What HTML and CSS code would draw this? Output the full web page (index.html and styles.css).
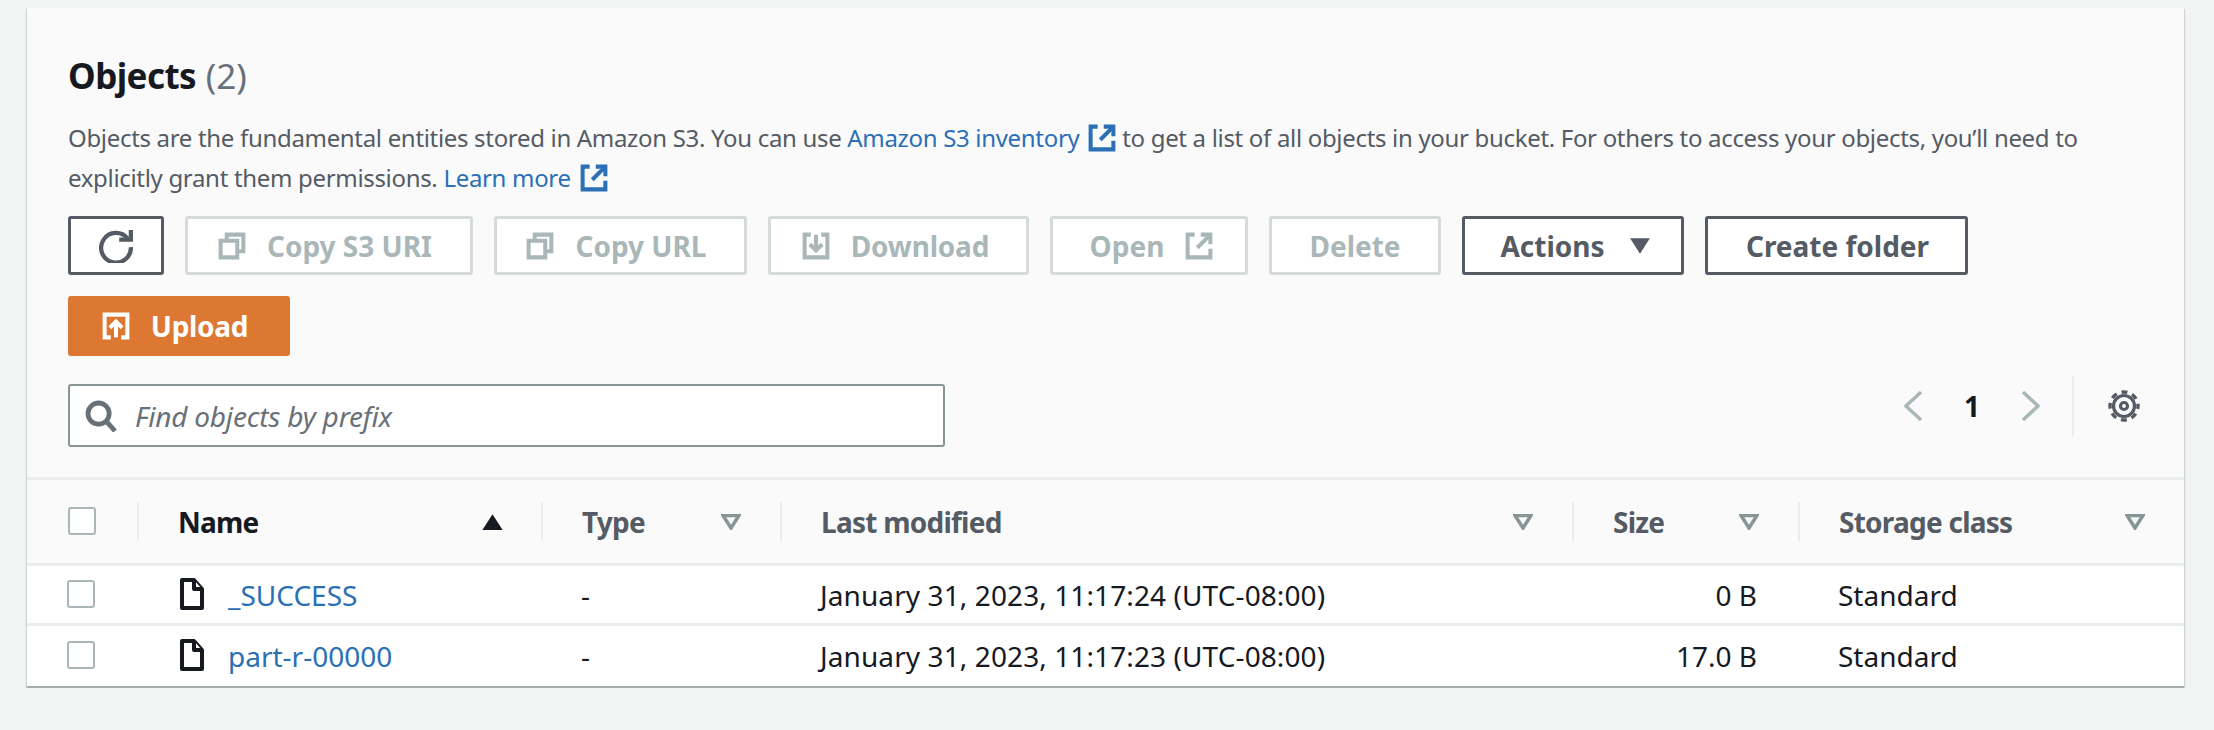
FILE: index.html
```html
<!DOCTYPE html>
<html lang="en">
<head>
    <meta charset="UTF-8">
    <title>Objects</title>
    <link rel="stylesheet" href="styles.css">
</head>
<body>
<svg class="defs" width="0" height="0" aria-hidden="true">
    <symbol id="i-external" viewBox="0 0 16 16"><path d="M5.500 1.500h-4v13h13V9.500"/><path d="M9 1.500h5.500V7"/><path d="M14.500 1.500 7 9"/></symbol>
    <symbol id="i-copy" viewBox="0 0 16 16"><path d="M1.500 5h9.500v9.500H1.500z"/><path d="M5 5V1.500h9.500V11H11"/></symbol>
    <symbol id="i-download" viewBox="0 0 16 16"><path d="M5 1.500H1.500v13h13v-13H11"/><path d="M8 1.500v9"/><path d="M4.500 7 8 10.500 11.500 7"/></symbol>
    <symbol id="i-upload" viewBox="0 0 16 16"><path d="M5 14.500H1.500v-13h13v13H11"/><path d="M8 14.500V5.500"/><path d="M4.500 9 8 5.500 11.500 9"/></symbol>
</svg>

<main class="card">
    <header class="card-head">
        <h2 class="title">Objects <span class="count">(2)</span></h2>
        <p class="desc">Objects are the fundamental entities stored in Amazon S3. You can use <a href="#">Amazon S3 inventory <svg class="ico-ext"><use href="#i-external"/></svg></a> to get a list of all objects in your bucket. For others to access your objects, you’ll need to explicitly grant them permissions. <a href="#">Learn more <svg class="ico-ext"><use href="#i-external"/></svg></a></p>

        <div class="actions">
            <button class="btn btn-icon" type="button" aria-label="Refresh">
                <svg class="ico ico-refresh" viewBox="0 0 16 16"><path d="M9.500 5h5.500V.5"/><path d="M15 8.500A7 7 0 1 1 13.500 4.500"/></svg>
            </button>
            <button class="btn btn-off btn-s3" type="button"><svg class="ico"><use href="#i-copy"/></svg>Copy S3 URI</button>
            <button class="btn btn-off btn-url" type="button"><svg class="ico"><use href="#i-copy"/></svg>Copy URL</button>
            <button class="btn btn-off btn-dl" type="button"><svg class="ico"><use href="#i-download"/></svg>Download</button>
            <button class="btn btn-off btn-open" type="button">Open<svg class="ico"><use href="#i-external"/></svg></button>
            <button class="btn btn-off btn-del" type="button">Delete</button>
            <button class="btn btn-act" type="button">Actions<svg class="caret" viewBox="0 0 20 16"><path d="M1 1h18L10 15z"/></svg></button>
            <button class="btn btn-new" type="button">Create folder</button>
            <button class="btn btn-up" type="button"><svg class="ico"><use href="#i-upload"/></svg>Upload</button>
        </div>

        <div class="tools">
            <label class="search">
                <svg class="ico ico-search" viewBox="0 0 16 16"><circle cx="6.800" cy="6.800" r="5.300"/><path d="m10.800 10.800 4.200 4.700"/></svg>
                <input type="text" placeholder="Find objects by prefix">
            </label>
            <div class="tools-right">
                <div class="pager">
                    <svg class="chev" viewBox="0 0 20 32"><path d="M18 2 3 16l15 14"/></svg>
                    <span class="page">1</span>
                    <svg class="chev" viewBox="0 0 20 32"><path d="M2 2l15 14L2 30"/></svg>
                </div>
                <button class="gear" type="button" aria-label="Preferences">
                    <svg viewBox="0 0 32 32">
                        <circle class="gear-teeth" cx="16" cy="16" r="14"/>
                        <circle cx="16" cy="16" r="10.500"/>
                        <circle cx="16" cy="16" r="3.500"/>
                    </svg>
                </button>
            </div>
        </div>
    </header>

    <div class="grid">
        <div class="th th-check"><span class="box"></span></div>
        <div class="th th-sorted">Name<svg class="caret sort" viewBox="0 0 20 16"><path d="M1 15h18L10 1z"/></svg></div>
        <div class="th">Type<svg class="filter" viewBox="0 0 20 16"><path d="M2 1.500h16L10 14z"/></svg></div>
        <div class="th">Last modified<svg class="filter" viewBox="0 0 20 16"><path d="M2 1.500h16L10 14z"/></svg></div>
        <div class="th">Size<svg class="filter" viewBox="0 0 20 16"><path d="M2 1.500h16L10 14z"/></svg></div>
        <div class="th">Storage class<svg class="filter" viewBox="0 0 20 16"><path d="M2 1.500h16L10 14z"/></svg></div>

        <div class="td td-check"><span class="box"></span></div>
        <div class="td td-name"><svg class="file" viewBox="0 0 24 32"><path d="M2 2h12l8 9v19H2z"/><path d="M14 2v9h8"/></svg><a href="#">_SUCCESS</a></div>
        <div class="td">-</div>
        <div class="td td-date">January 31, 2023, 11:17:24 (UTC-08:00)</div>
        <div class="td td-size">0 B</div>
        <div class="td">Standard</div>

        <div class="td td-check"><span class="box"></span></div>
        <div class="td td-name"><svg class="file" viewBox="0 0 24 32"><path d="M2 2h12l8 9v19H2z"/><path d="M14 2v9h8"/></svg><a href="#">part-r-00000</a></div>
        <div class="td">-</div>
        <div class="td td-date">January 31, 2023, 11:17:23 (UTC-08:00)</div>
        <div class="td td-size">17.0 B</div>
        <div class="td">Standard</div>
    </div>
</main>
</body>
</html>
```

FILE: styles.css
```css
* { box-sizing: border-box; }

body {
    margin: 0;
    background: #f2f3f3;
    color: #16191f;
    font-family: "Noto Sans", "Liberation Sans", sans-serif;
    font-size: 28px;
}

.defs { position: absolute; }

a { color: #2b6fb5; text-decoration: none; }

.card {
    width: 2157px;
    margin: 8px 0 0 27px;
    background: #fafafa;
    border-bottom: 2px solid #a3adae;
    box-shadow: 1px 1px 1px 0 rgba(0,28,36,.15), -1px 1px 1px 0 rgba(0,28,36,.15);
}

.card-head {
    padding: 44px 41px 30px;
    border-bottom: 3px solid #eaeded;
}

.title {
    margin: 0;
    font-size: 35px;
    line-height: 48px;
    font-weight: 700;
    letter-spacing: -.55px;
}
.count { color: #687078; font-weight: 400; letter-spacing: 0; margin-left: 1px; }

.desc {
    margin: 18px 0 0;
    width: 2040px;
    color: #545b64;
    font-size: 24px;
    line-height: 40px;
    letter-spacing: -.32px;
}

.ico-ext {
    width: 28px;
    height: 30px;
    vertical-align: -6px;
    margin-left: 3px;
    fill: none;
    stroke: #2b6fb5;
    stroke-width: 2.300;
}

.actions {
    display: flex;
    flex-wrap: wrap;
    gap: 21px;
    margin-top: 18px;
}

.btn {
    display: flex;
    align-items: center;
    justify-content: center;
    gap: 21px;
    height: 59px;
    padding: 0;
    background: #fff;
    border: 3px solid #545b64;
    border-radius: 3px;
    color: #545b64;
    font: 700 28px "Noto Sans", "Liberation Sans", sans-serif;
}

.btn-icon { width: 96px; }
.btn-s3 { width: 288px; padding-right: 8px; }
.btn-url { width: 253px; padding-right: 8px; }
.btn-dl { width: 261px; padding-right: 6px; letter-spacing: -.2px; }
.btn-open { width: 198px; padding-left: 5px; }
.btn-del { width: 172px; }
.btn-act { width: 222px; gap: 24px; padding-left: 5px; }
.btn-new { width: 263px; padding-left: 2px; }

.btn-off {
    border-color: #d5dbdb;
    color: #aab7b8;
}

.btn-up {
    width: 222px;
    height: 60px;
    padding-right: 8px;
    background: #dd7832;
    border-color: #dd7832;
    color: #fff;
    letter-spacing: -.3px;
}

.ico {
    width: 28px;
    height: 30px;
    fill: none;
    stroke: currentColor;
    stroke-width: 2.300;
}

.ico-refresh { width: 34px; height: 34px; stroke-width: 2; }

.caret { width: 22px; height: 18px; fill: currentColor; }

.tools {
    display: flex;
    align-items: flex-start;
    justify-content: space-between;
    margin-top: 28px;
}

.search {
    display: flex;
    align-items: center;
    gap: 16px;
    width: 877px;
    height: 63px;
    padding-left: 15px;
    background: #fff;
    border: 2px solid #879596;
    border-radius: 3px;
}

.ico-search { width: 32px; height: 32px; color: #687078; stroke-width: 2.400; }

.search input {
    flex: 1;
    border: 0;
    outline: 0;
    background: none;
    font: italic 28px "Noto Sans", "Liberation Sans", sans-serif;
    letter-spacing: -.2px;
}
.search input::placeholder { color: #687078; opacity: 1; }

.tools-right {
    display: flex;
    align-items: center;
    margin-top: -8px;
}

.pager {
    display: flex;
    align-items: center;
    height: 60px;
    padding-right: 31px;
    border-right: 2px solid #eaeded;
}

.chev {
    width: 20px;
    height: 32px;
    fill: none;
    stroke: #aab7b8;
    stroke-width: 3.500;
}

.page {
    width: 98px;
    text-align: center;
    font-weight: 700;
}

.gear {
    width: 32px;
    height: 32px;
    margin: 0 3px 0 34px;
    padding: 0;
    border: 0;
    background: none;
}
.gear svg {
    display: block;
    overflow: visible;
    fill: none;
    stroke: #545b64;
    stroke-width: 3.200;
}
.gear-teeth { stroke-width: 3.400; stroke-dasharray: 6 5; stroke-dashoffset: 3; }

.grid {
    display: grid;
    grid-template-columns: 110px 404px 239px 792px 226px 386px;
}

.th {
    display: flex;
    align-items: center;
    justify-content: space-between;
    height: 86px;
    padding: 0 39px 0 41px;
    border-bottom: 3px solid #eaeded;
    color: #545b64;
    font-weight: 700;
    letter-spacing: -.75px;
    position: relative;
}
.th-sorted { color: #16191f; padding-right: 26px; }

/* column separators */
.th + .th::before {
    content: "";
    position: absolute;
    left: 0;
    top: 22px;
    bottom: 22px;
    width: 2px;
    background: #eaeded;
}

.th-check, .td-check { padding-left: 41px; }
.th-check .box { margin-top: -2px; }

.sort { width: 23px; margin-right: 11px; color: #16191f; }

.filter {
    width: 20px;
    height: 16px;
    fill: none;
    stroke: #879596;
    stroke-width: 3.500;
}

.td {
    display: flex;
    align-items: center;
    height: 60px;
    padding: 0 26px 0 40px;
    background: #fff;
    border-bottom: 3px solid #eaeded;
}
.td:nth-last-child(-n+6) { border-bottom: 0; }

.td-name { gap: 24px; padding-left: 43px; }
.td-size { justify-content: flex-end; padding-right: 41px; }
.td-date { letter-spacing: .1px; }

.box {
    display: block;
    width: 28px;
    height: 28px;
    background: #fff;
    border: 2px solid #aab7b8;
    border-radius: 3px;
}
.td-check .box { margin-top: -2px; }

.file {
    width: 24px;
    height: 32px;
    margin-top: -2px;
    fill: #fff;
    stroke: #16191f;
    stroke-width: 4;
    stroke-linejoin: round;
}
```
